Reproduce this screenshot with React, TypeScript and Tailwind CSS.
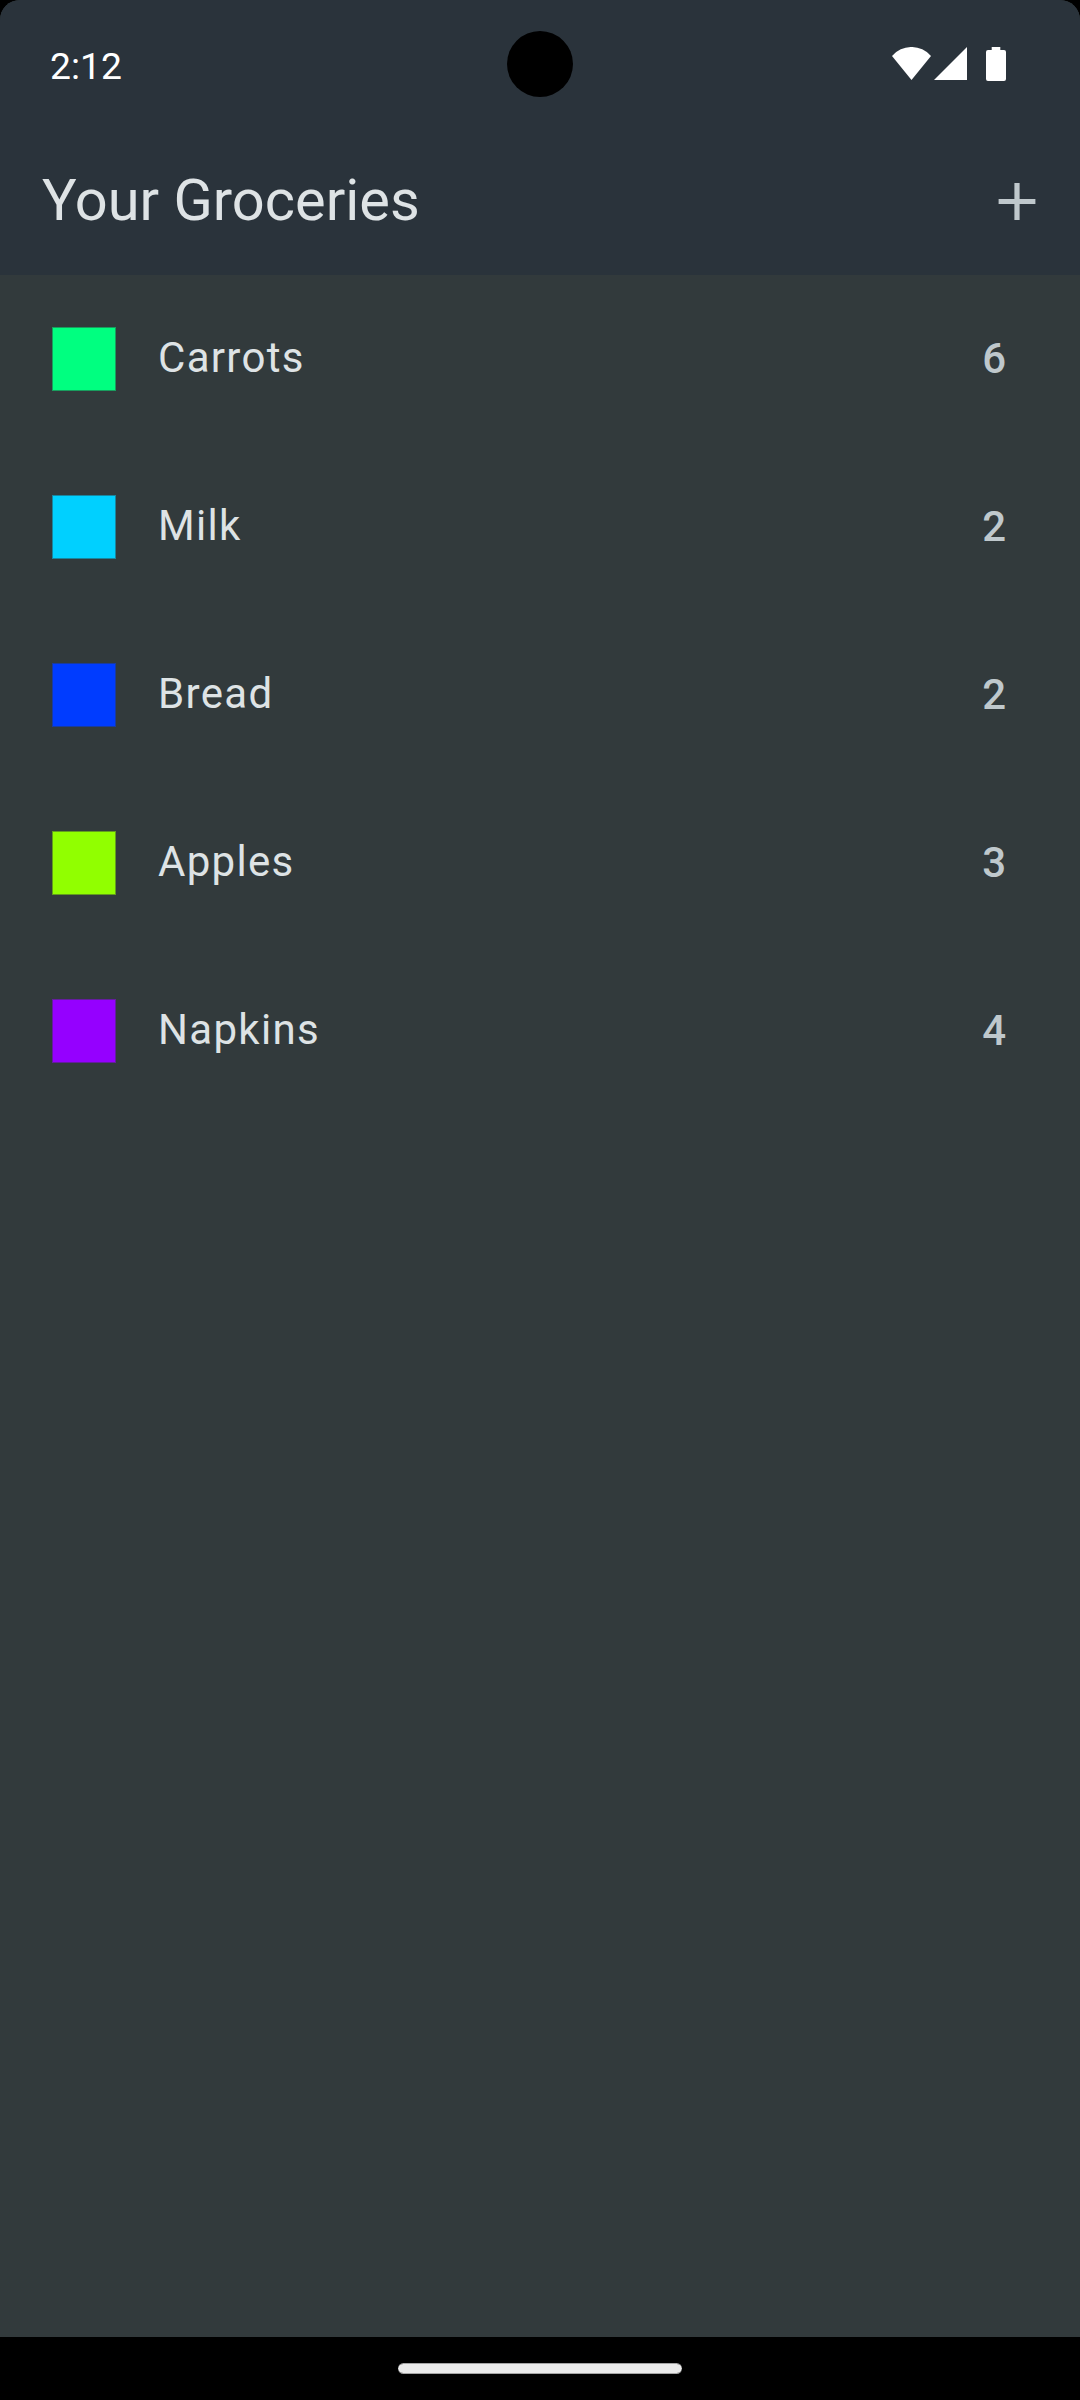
const items = [
  { name: 'Carrots', quantity: 6, color: 'bg-[#00ff80] border-[#00ff80]/50' },
  { name: 'Milk', quantity: 2, color: 'bg-[#00d0ff] border-[#00d0ff]/50' },
  { name: 'Bread', quantity: 2, color: 'bg-[#003cff] border-[#003cff]/50' },
  { name: 'Apples', quantity: 3, color: 'bg-[#91ff00] border-[#91ff00]/50' },
  { name: 'Napkins', quantity: 4, color: 'bg-[#9500ff] border-[#9500ff]/50' },
];

export default function App() {
  return (
    <div className="w-[1080px] bg-black">
      <div className="flex h-[2400px] w-[1080px] flex-col overflow-hidden rounded-t-[20px] bg-[#323a3c] font-[Roboto,sans-serif]">
        <header className="h-[275px] shrink-0 bg-[#2a333b]">
          <div className="relative flex h-[128px] items-center justify-between pl-[50px] pr-[73px] text-white">
            <span className="pt-[5px] text-[37.25px]">2:12</span>
            <div className="absolute left-[507px] top-[31px] size-[66px] rounded-full bg-black" />
            <svg className="h-[34px] w-[115px]" viewBox="0 0 115 34" fill="white">
              <path d="M0 9A25.600 25.600 0 0 1 39 9L19.500 33Z" />
              <path d="M42 33L75 0V33Z" />
              <path d="M96 3h3.700V0h8.600V3H112q2 0 2 2V32q0 2-2 2H96q-2 0-2-2V5q0-2 2-2Z" />
            </svg>
          </div>
          <div className="flex h-[147px] items-center justify-between pl-[42px] pr-[44px]">
            <h1 className="pb-[3px] text-[57.75px] text-[#dee3e5]">Your Groceries</h1>
            <svg className="h-[37px] w-[38px]" viewBox="0 0 38 37" fill="#bfc8cc">
              <path d="M16.400 .1h5.200v15.800h15.800v5.200H21.600v15.800h-5.200V21.100H.6v-5.200h15.800Z" />
            </svg>
          </div>
        </header>
        <main className="flex-1">
          {items.map((i) => (
            <div key={i.name} className="flex h-[168px] items-center pl-[52px] pr-[74px]">
              <div className={`size-[64px] border bg-clip-padding ${i.color}`} />
              <span className="ml-[42px] flex-1 pb-[4px] text-[42px] tracking-[1.3125px] text-[#dee3e5]">{i.name}</span>
              <span className="pb-[2px] text-[42px] font-medium text-[#bfc8cc]">{i.quantity}</span>
            </div>
          ))}
        </main>
        <footer className="flex h-[63px] items-center justify-center bg-black">
          <div className="h-[11px] w-[284px] rounded-full border-y border-[#ebebeb]/70 bg-[#ebebeb] bg-clip-padding" />
        </footer>
      </div>
    </div>
  );
}
